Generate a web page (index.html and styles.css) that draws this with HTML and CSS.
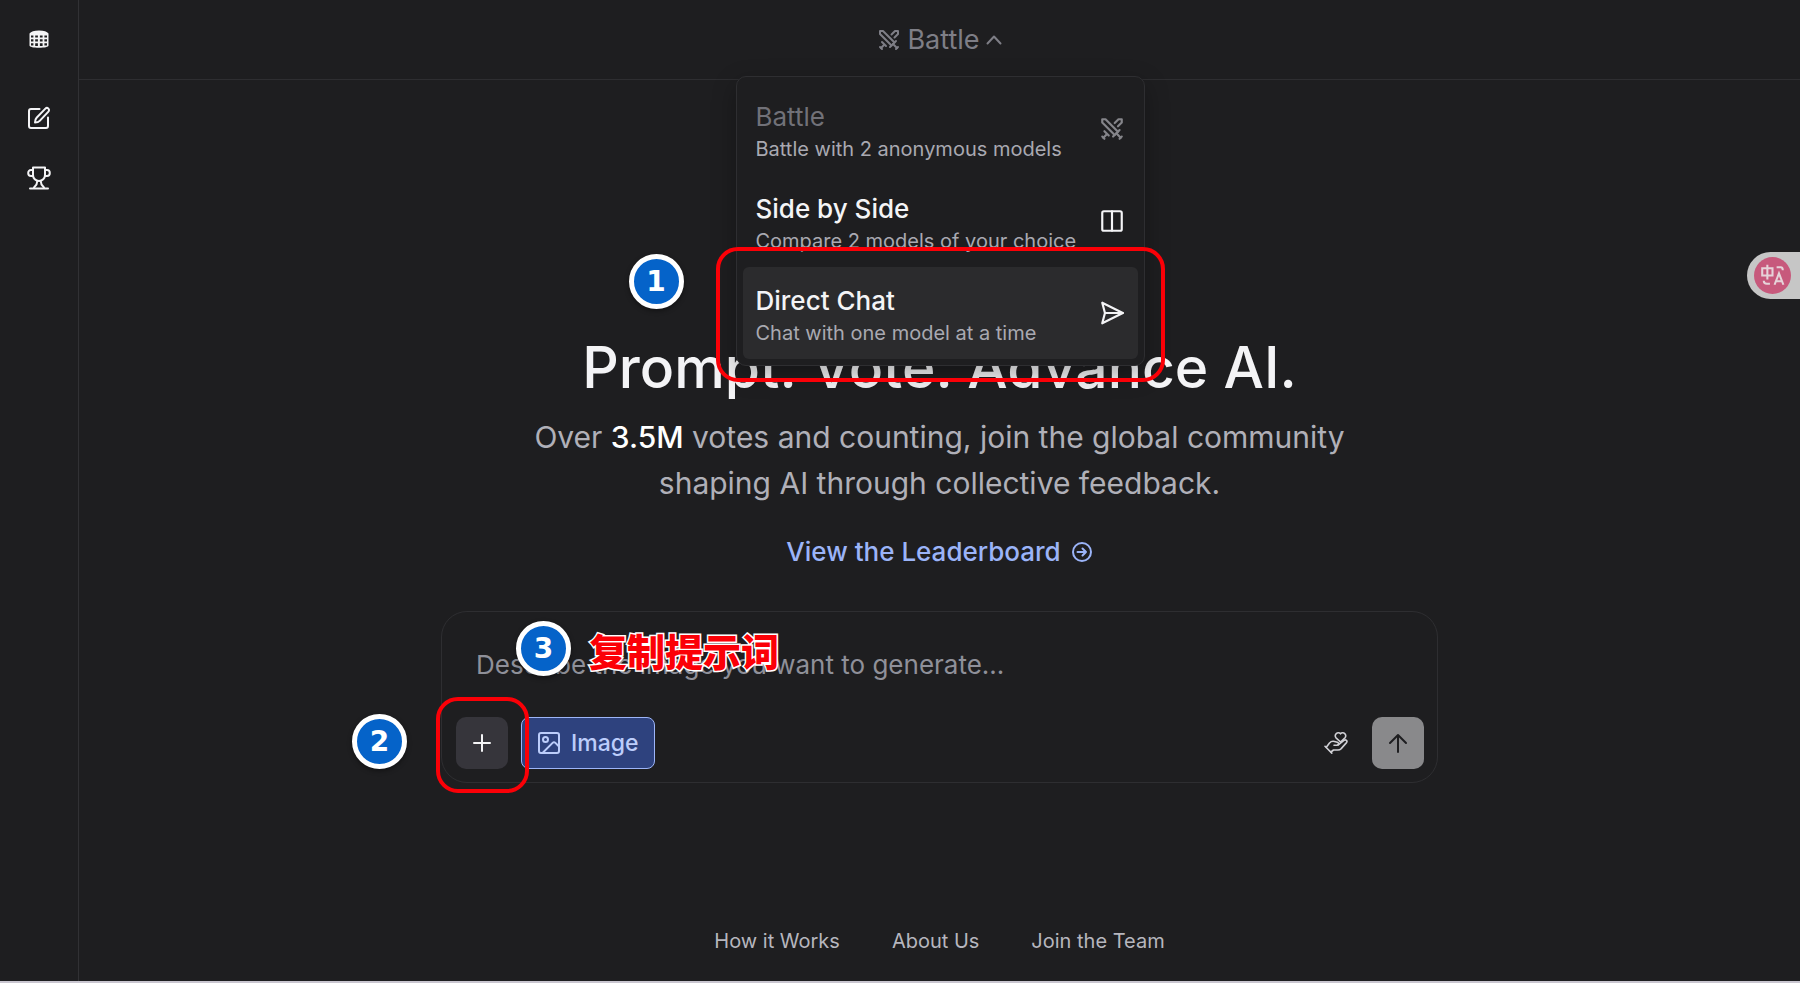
FILE: index.html
```html
<!DOCTYPE html>
<html lang="en">
  <head>
    <meta charset="UTF-8" />
    <meta name="viewport" content="width=device-width, initial-scale=1.0" />
    <title>Arena</title>
    <link rel="stylesheet" href="styles.css">
  </head>
  <body>
    <svg class="sprite" aria-hidden="true">
      <symbol id="swords" viewBox="0 0 24 24">
        <path d="M14.5 17.5 3 6V3h3l11.5 11.5" />
        <path d="m13 19 6-6" />
        <path d="m16 16 4 4" />
        <path d="m19 21 2-2" />
        <path d="M14.5 6.5 18 3h3v3l-3.5 3.5" />
        <path d="m5 14 4 4" />
        <path d="m7 17-3 3" />
        <path d="m3 19 2 2" />
      </symbol>
    </svg>

    <aside class="sidebar">
      <a href="#" class="logo" aria-label="Home">
        <svg viewBox="0 0 20 18">
          <path class="solid" d="M.5 3.500C2 1.300 5 .4 10 .4s8 .9 9.500 3.100V15.500c0 1.500-4 2.200-9.500 2.200S.5 17 .5 15.500z" />
          <path class="hole" d="M2 5.600h2.400v2H2zM6.200 5.600h2.700v2H6.200zM10.900 5.600h2.700v2h-2.700zM15.400 5.600H18v2h-2.600zM2 9.300h2.400v2.200H2zM6.200 9.300h2.700v2.200H6.200zM10.900 9.300h2.700v2.200h-2.700zM15.400 9.300H18v2.200h-2.600zM2 13.200h2.400v2.400H2zM6.200 13.200h2.700v2.800H6.200zM10.900 13.200h2.700v2.800h-2.700zM15.400 13.200H18v2.400h-2.600z" />
        </svg>
      </a>
      <nav class="side-nav">
        <a href="#" aria-label="New chat">
          <svg class="icon" viewBox="0 0 24 24">
            <path d="M12.500 3H4a2 2 0 0 0-2 2v15a2 2 0 0 0 2 2h15a2 2 0 0 0 2-2v-8.500" />
            <path d="M18.400 2.600a2.050 2.050 0 0 1 3 3l-8.700 9.300c-1 1.100-2.700 1.600-4.700 1.600 0-2 .5-3.700 1.600-4.800z" />
          </svg>
        </a>
        <a href="#" aria-label="Leaderboard">
          <svg class="icon" viewBox="0 0 24 24">
            <path d="M6 1.500h12V9a6 6 0 0 1-12 0z" />
            <path d="M6 4H4C2.300 4 1.200 5.200 1.200 7S2.300 10 4 10h2" />
            <path d="M18 4h2c1.700 0 2.800 1.200 2.800 3S21.700 10 20 10h-2" />
            <path d="M10.300 15c0 3.500-1.300 4.500-3.300 6.500" />
            <path d="M13.700 15c0 3.500 1.300 4.500 3.300 6.500" />
            <path d="M3 22.500h18" />
          </svg>
        </a>
      </nav>
    </aside>

    <div class="page">
      <header class="topbar">
        <div class="mode">
          <button type="button" class="mode-button" aria-expanded="true">
            <svg class="icon mode-icon"><use href="#swords" /></svg>
            Battle
            <svg class="icon chevron" viewBox="0 0 16 16"><path d="m1.500 11.500 6.500-7 6.500 7" /></svg>
          </button>

          <div class="menu">
            <button type="button" class="menu-item muted">
              <span class="menu-text">
                <span class="menu-title">Battle</span>
                <span class="menu-note">Battle with 2 anonymous models</span>
              </span>
              <svg class="icon"><use href="#swords" /></svg>
            </button>
            <button type="button" class="menu-item">
              <span class="menu-text">
                <span class="menu-title">Side by Side</span>
                <span class="menu-note">Compare 2 models of your choice</span>
              </span>
              <svg class="icon" viewBox="0 0 24 24">
                <rect x="3" y="3" width="18" height="18" rx="1.500" />
                <path d="M12 3v18" />
              </svg>
            </button>
            <div class="step-anchor">
              <button type="button" class="menu-item active">
                <span class="menu-text">
                  <span class="menu-title">Direct Chat</span>
                  <span class="menu-note">Chat with one model at a time</span>
                </span>
                <svg class="icon" viewBox="0 0 24 24">
                  <path d="M3 2.500 22 12 3 21.500 5.500 12z" />
                  <path d="M5.500 12H22" />
                </svg>
              </button>
              <span class="frame frame-chat"></span>
              <span class="step step-1">1</span>
            </div>
          </div>
        </div>
      </header>

      <main>
        <h1>Prompt. Vote. Advance AI.</h1>
        <p class="lead">
          Over <strong>3.5M</strong> votes and counting, join the global community
          shaping AI through collective feedback.
        </p>
        <a href="#" class="leaderboard">
          View the Leaderboard
          <svg class="icon" viewBox="0 0 22 22">
            <circle cx="11" cy="11" r="9" />
            <path d="M6.500 11h8.500M11.500 7.500 15 11l-3.500 3.500" />
          </svg>
        </a>

        <form class="composer">
          <textarea rows="1" aria-label="Prompt" placeholder="Describe the image you want to generate..."></textarea>
          <div class="tools">
            <button type="button" class="square add" aria-label="Add file">
              <svg class="icon" viewBox="0 0 24 24"><path d="M12 4v16M4 12h16" /></svg>
            </button>
            <button type="button" class="image-mode">
              <svg class="icon" viewBox="0 0 24 24">
                <rect x="2" y="2" width="20" height="20" rx="2" />
                <circle cx="8.500" cy="8.500" r="2.500" />
                <path d="m22 15.500-3.600-3.600a2 2 0 0 0-2.800 0L5.500 22" />
              </svg>
              Image
            </button>
            <button type="button" class="give" aria-label="Support">
              <svg class="icon" viewBox="0 0 24 24">
                <path d="M16.500 11 12 6.800a2.900 2.900 0 0 1 4.500-4 2.900 2.900 0 0 1 4.500 4z" />
                <path d="m1 15.300 6.800 6.800" />
                <path d="M2.300 16.300 5.500 12c1.400-1.600 3-2 5-1.500l2.900.8c1.800.6 1.400 2.900-.4 2.900H10" />
                <path d="m14 14 6-4.700c1.800-1.300 3.800.6 2.500 2.300l-5.300 6c-1 1-1.900 1.400-3.200 1.400H9.500L6.900 21" />
              </svg>
            </button>
            <button type="submit" class="square send" aria-label="Send">
              <svg class="icon" viewBox="0 0 24 24"><path d="M12 21V4M4 12l8-8 8 8" /></svg>
            </button>
          </div>
          <span class="frame frame-add"></span>
          <span class="step step-2">2</span>
          <span class="step step-3">3</span>
          <span class="step-label" lang="zh">复制提示词</span>
        </form>
      </main>

      <footer>
        <a href="#">How it Works</a>
        <a href="#">About Us</a>
        <a href="#">Join the Team</a>
      </footer>
    </div>

    <button type="button" class="translate" aria-label="Translate">
      <svg viewBox="0 0 36 36">
        <circle cx="18" cy="18" r="18" />
        <path d="M8 11h10v7H8zM13 7.500V22M22 10h4q2 0 2 3M9.500 23q0 3 3 3h3" />
        <path d="m20 27 4.300-11 4.300 11M21.500 23.500h5.600" />
      </svg>
    </button>
  </body>
</html>
```
FILE: styles.css
```css
* {
  box-sizing: border-box;
}

body {
  margin: 0;
  min-height: 100vh;
  display: flex;
  background-color: #1e1e20;
  border-bottom: 2px solid #c9c6d0;
  color: #f4f4f6;
  font-family: Inter, "Liberation Sans", sans-serif;
  font-size: 20px;
}

a {
  color: inherit;
  text-decoration: none;
}

button {
  padding: 0;
  border: none;
  background: none;
  color: inherit;
  font: inherit;
  cursor: pointer;
}

.sprite {
  position: absolute;
  width: 0;
  height: 0;
}

.icon {
  flex: none;
  width: 26px;
  height: 26px;
  fill: none;
  stroke: currentColor;
  stroke-width: 2;
  stroke-linecap: round;
  stroke-linejoin: round;
}

/* sidebar */
.sidebar {
  flex: none;
  width: 79px;
  border-right: 1px solid #313134;
  display: flex;
  flex-direction: column;
  align-items: center;
}

.logo {
  display: flex;
  align-items: center;
  height: 78px;
}

.logo svg {
  width: 20px;
  height: 18px;
}

.solid {
  fill: #f4f4f5;
}

.hole {
  fill: #1e1e20;
}

.side-nav {
  display: flex;
  flex-direction: column;
  gap: 36px;
  padding-top: 28px;
}

.side-nav a {
  display: flex;
}

.side-nav .icon {
  width: 24px;
  height: 24px;
}

/* top bar and mode menu */
.page {
  flex: 1;
  min-width: 0;
  display: flex;
  flex-direction: column;
}

.topbar {
  height: 80px;
  border-bottom: 1px solid #2e2e31;
  display: flex;
  justify-content: center;
  align-items: center;
}

.mode {
  position: relative;
}

.mode-button {
  display: flex;
  align-items: center;
  gap: 6px;
  color: #7e7e86;
  font-size: 27px;
  line-height: 33px;
}

.mode-icon {
  width: 24px;
  height: 24px;
}

.chevron {
  width: 16px;
  height: 16px;
}

.menu {
  position: absolute;
  top: 53px;
  left: 50%;
  z-index: 2;
  width: 409px;
  margin-left: -204px;
  padding: 6px;
  border: 1px solid #2e2e31;
  border-radius: 10px;
  background-color: #1e1e20;
  box-shadow: 0 8px 24px rgba(0, 0, 0, 0.3);
}

.menu-item {
  width: 100%;
  height: 92px;
  padding: 4px 13px 0;
  border-radius: 6px;
  display: flex;
  justify-content: space-between;
  align-items: center;
  text-align: left;
}

.menu-item .icon {
  margin-bottom: 4px;
}

.menu-item.active {
  background-color: #2b2b2d;
}

.menu-text {
  display: flex;
  flex-direction: column;
}

.menu-title {
  font-size: 26px;
  font-weight: 500;
  line-height: 36px;
}

.menu-note {
  color: #a9a9b1;
  font-size: 20px;
  line-height: 28px;
}

.muted .menu-title {
  color: #717178;
  font-weight: 400;
}

.muted .icon {
  color: #85858a;
}

/* hero */
main {
  display: flex;
  flex-direction: column;
  align-items: center;
  padding: 252px 40px 40px;
}

h1 {
  margin: 0;
  font-size: 57px;
  font-weight: 500;
  line-height: 72px;
}

.lead {
  max-width: 840px;
  margin: 10px 0 0;
  color: #b0b0b8;
  font-size: 30px;
  line-height: 46px;
  text-align: center;
}

.lead strong {
  color: #fff;
  font-weight: 500;
}

.leaderboard {
  display: flex;
  align-items: center;
  gap: 10px;
  margin-top: 28px;
  color: #9bb4f8;
  font-size: 26px;
  font-weight: 500;
  line-height: 36px;
}

.leaderboard .icon {
  width: 22px;
  height: 22px;
}

/* composer */
.composer {
  position: relative;
  width: 100%;
  max-width: 997px;
  margin-top: 41px;
  padding: 37px 13px 13px 14px;
  border: 1px solid #2e2e31;
  border-radius: 26px;
}

.composer textarea {
  display: block;
  width: 100%;
  height: 68px;
  padding: 0 20px;
  border: none;
  outline: none;
  resize: none;
  background: none;
  color: inherit;
  font: inherit;
  font-size: 26px;
  line-height: 32px;
}

.composer textarea::placeholder {
  color: #8f9099;
}

.tools {
  display: flex;
  align-items: center;
  gap: 13px;
}

.square {
  display: flex;
  justify-content: center;
  align-items: center;
  width: 52px;
  height: 52px;
  border-radius: 10px;
}

.add {
  background-color: #36353b;
}

.square .icon {
  width: 24px;
  height: 24px;
}

.image-mode {
  display: flex;
  align-items: center;
  gap: 10px;
  height: 52px;
  padding: 0 15px;
  border: 1px solid #9db5f8;
  border-radius: 8px;
  background-color: #2e427e;
  color: #bccdfb;
  font-size: 23px;
  font-weight: 500;
}

.image-mode .icon {
  width: 24px;
  height: 24px;
}

.give {
  display: flex;
  margin-left: auto;
  margin-right: 11px;
  color: #d0d0d5;
}

.give .icon {
  width: 24px;
  height: 24px;
  stroke-width: 1.6;
}

.send {
  background-color: #89898b;
  color: #1e1e20;
}

/* footer */
footer {
  display: flex;
  justify-content: center;
  gap: 52px;
  margin-top: auto;
  padding-bottom: 26px;
  color: #b6b6be;
  font-size: 20px;
  line-height: 28px;
}

/* numbered steps */
.step-anchor {
  position: relative;
}

.frame {
  position: absolute;
  border: 4px solid #fb0007;
  border-radius: 22px;
  pointer-events: none;
}

.frame-chat {
  inset: -20px -27px -23px;
}

.frame-add {
  top: 85px;
  left: -6px;
  width: 93px;
  height: 96px;
}

.step {
  position: absolute;
  display: flex;
  justify-content: center;
  align-items: center;
  width: 55px;
  height: 55px;
  border: 5px solid #fff;
  border-radius: 50%;
  background-color: #0563c9;
  box-shadow: 0 2px 5px rgba(0, 0, 0, 0.4);
  color: #fff;
  font: bold 28px "DejaVu Sans", sans-serif;
}

.step-1 {
  top: -13px;
  left: -114px;
}

.step-2 {
  top: 102px;
  left: -90px;
}

.step-3 {
  top: 9px;
  left: 74px;
}

.step-label {
  position: absolute;
  top: 14px;
  left: 147px;
  color: #fb0007;
  font: 900 38px/48px "Noto Sans CJK SC", sans-serif;
  -webkit-text-stroke: 3px #fff;
  paint-order: stroke fill;
  white-space: nowrap;
}

/* floating translate tab */
.translate {
  position: fixed;
  top: 252px;
  right: 0;
  display: flex;
  align-items: center;
  width: 53px;
  height: 47px;
  padding-left: 7px;
  border-radius: 24px 0 0 24px;
  background-color: #c6c6c6;
}

.translate svg {
  width: 37px;
  height: 37px;
  fill: none;
  stroke: #e6d3d9;
  stroke-width: 2;
}

.translate circle {
  fill: #c7597c;
  stroke: none;
}
```
